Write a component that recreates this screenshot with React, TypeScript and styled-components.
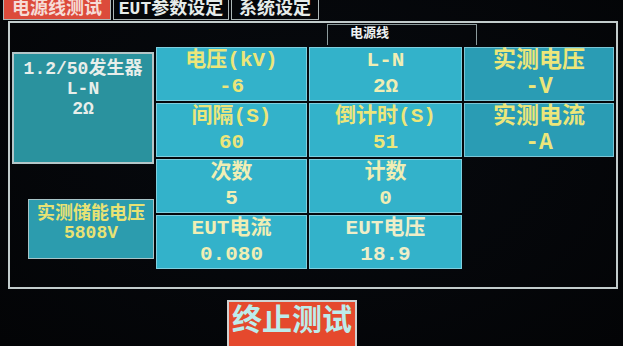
import React from 'react';
import styled, { createGlobalStyle } from 'styled-components';

const GlobalStyle = createGlobalStyle`
  html, body {
    margin: 0;
    padding: 0;
    background: #04060a;
    overflow: hidden;
  }
`;

const FONT = `"Liberation Mono", "Noto Sans CJK SC", monospace`;

const Screen = styled.div`
  width: 623px;
  height: 346px;
  overflow: hidden;
  background: radial-gradient(ellipse at 50% 40%, #070a0f 0%, #030406 100%);
  font-family: ${FONT};
  font-weight: 700;
`;

const TabBar = styled.div`
  display: flex;
  height: 20px;
  padding-left: 3px;
  gap: 2px;
`;

const Tab = styled.div<{ $active?: boolean; $width: number }>`
  box-sizing: border-box;
  width: ${(p) => p.$width}px;
  height: 20px;
  border: 1px solid #aeb8b8;
  border-top: none;
  background: ${(p) => (p.$active ? '#dc4b3b' : '#05070a')};
  color: ${(p) => (p.$active ? '#f6dcd6' : '#e6ecea')};
  font-size: 18px;
  line-height: 19px;
  text-align: center;
  white-space: nowrap;
`;

const Frame = styled.div`
  box-sizing: border-box;
  width: 610px;
  margin: 1px 0 0 8px;
  border: 2px solid #c2cccc;
  padding: 1px 2px 18px 2px;
`;

const Grid = styled.div`
  display: grid;
  grid-template-columns: 142px 151px 153px 150px;
  grid-template-rows: 21px repeat(4, 54px);
  gap: 2px;
`;

const GroupTab = styled.div`
  grid-column: 3 / span 2;
  grid-row: 1;
  justify-self: start;
  box-sizing: border-box;
  width: 150px;
  margin-left: 18px;
  border: 1px solid #8c9a9c;
  border-bottom: none;
  padding-left: 22px;
  color: #eef2f2;
  font-size: 13px;
  line-height: 18px;
`;

const tones: Record<string, string> = {
  bright: '#33b2ca',
  mid: '#2a9cb4',
};

const Cell = styled.div<{
  $tone: string;
  $ink: string;
  $col: number;
  $row: number;
  $size?: number;
}>`
  grid-column: ${(p) => p.$col};
  grid-row: ${(p) => p.$row};
  box-sizing: border-box;
  display: flex;
  flex-direction: column;
  align-items: center;
  justify-content: center;
  background: ${(p) => tones[p.$tone]};
  border: 1px solid rgba(190, 232, 240, 0.55);
  color: ${(p) => p.$ink};
  font-size: ${(p) => p.$size ?? 21}px;
  line-height: 26px;
  white-space: nowrap;
`;

const SourceCell = styled.div`
  grid-column: 1;
  grid-row: 2 / span 3;
  align-self: start;
  box-sizing: border-box;
  height: 112px;
  margin-top: 5px;
  border: 2px solid #b4c6c8;
  background: #2a929e;
  color: #e8eeea;
  font-size: 18px;
  line-height: 20px;
  padding-top: 5px;
  text-align: center;
  white-space: nowrap;
`;

const StoreCell = styled.div`
  grid-column: 1;
  grid-row: 4 / span 2;
  align-self: start;
  box-sizing: border-box;
  height: 60px;
  margin: 40px 0 0 16px;
  border: 1px solid #a8c4c8;
  background: #2c9cae;
  color: #e8e274;
  font-size: 18px;
  line-height: 19px;
  padding-top: 5px;
  text-align: center;
  white-space: nowrap;
`;

const Footer = styled.div`
  display: flex;
  padding-left: 227px;
  margin-top: 11px;
`;

const StopButton = styled.div`
  box-sizing: border-box;
  width: 130px;
  height: 48px;
  border: 2px solid #cfd2d2;
  background: #e5492d;
  color: #bdeceb;
  font-size: 30px;
  line-height: 40px;
  text-align: center;
`;

const YELLOW = '#ece67a';
const PALE = '#f0eeb4';

type CellData = {
  col: number;
  row: number;
  tone: string;
  ink: string;
  label: string;
  value: string;
  size?: number;
};

const cells: CellData[] = [
  { col: 2, row: 2, tone: 'bright', ink: YELLOW, label: '电压(kV)', value: '-6' },
  { col: 2, row: 3, tone: 'bright', ink: YELLOW, label: '间隔(S)', value: '60' },
  { col: 2, row: 4, tone: 'bright', ink: PALE, label: '次数', value: '5' },
  { col: 2, row: 5, tone: 'bright', ink: PALE, label: 'EUT电流', value: '0.080' },
  { col: 3, row: 2, tone: 'bright', ink: PALE, label: 'L-N', value: '2Ω' },
  { col: 3, row: 3, tone: 'bright', ink: YELLOW, label: '倒计时(S)', value: '51' },
  { col: 3, row: 4, tone: 'bright', ink: PALE, label: '计数', value: '0' },
  { col: 3, row: 5, tone: 'bright', ink: '#eeeec8', label: 'EUT电压', value: '18.9' },
  { col: 4, row: 2, tone: 'mid', ink: YELLOW, label: '实测电压', value: '-V', size: 23 },
  { col: 4, row: 3, tone: 'mid', ink: YELLOW, label: '实测电流', value: '-A', size: 23 },
];

export default function App() {
  return (
    <>
      <GlobalStyle />
      <Screen>
        <TabBar>
          <Tab $active $width={108}>电源线测试</Tab>
          <Tab $width={116}>EUT参数设定</Tab>
          <Tab $width={88}>系统设定</Tab>
        </TabBar>
        <Frame>
          <Grid>
            <GroupTab>电源线</GroupTab>
            <SourceCell>
              1.2/50发生器
              <br />
              L-N
              <br />
              2Ω
            </SourceCell>
            <StoreCell>
              实测储能电压
              <br />
              5808V
            </StoreCell>
            {cells.map((c) => (
              <Cell
                key={c.label}
                $col={c.col}
                $row={c.row}
                $tone={c.tone}
                $ink={c.ink}
                $size={c.size}
              >
                <span>{c.label}</span>
                <span>{c.value}</span>
              </Cell>
            ))}
          </Grid>
        </Frame>
        <Footer>
          <StopButton>终止测试</StopButton>
        </Footer>
      </Screen>
    </>
  );
}
